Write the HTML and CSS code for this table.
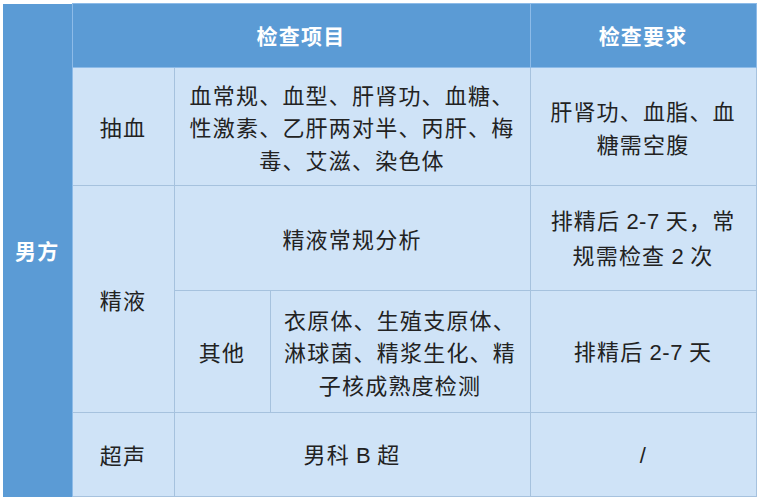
FILE: index.html
```html
<!DOCTYPE html>
<html lang="zh-CN">
<head>
<meta charset="utf-8">
<link rel="stylesheet" href="styles.css">
</head>
<body>
<table class="exam">
  <colgroup>
    <col class="c-side">
    <col class="c-cat">
    <col class="c-sub">
    <col class="c-item">
    <col class="c-req">
  </colgroup>
  <tr class="r-head">
    <th class="side" rowspan="5">男方</th>
    <th colspan="3">检查项目</th>
    <th>检查要求</th>
  </tr>
  <tr class="r-blood">
    <td>抽血</td>
    <td colspan="2">血常规、血型、肝肾功、血糖、<br>性激素、乙肝两对半、丙肝、梅<br>毒、艾滋、染色体</td>
    <td>肝肾功、血脂、血<br>糖需空腹</td>
  </tr>
  <tr class="r-semen">
    <td rowspan="2">精液</td>
    <td colspan="2">精液常规分析</td>
    <td>排精后 <span class="num">2-7</span> 天，常<br>规需检查 <span class="num">2</span> 次</td>
  </tr>
  <tr class="r-other">
    <td>其他</td>
    <td>衣原体、生殖支原体、<br>淋球菌、精浆生化、精<br>子核成熟度检测</td>
    <td>排精后 <span class="num">2-7</span> 天</td>
  </tr>
  <tr class="r-us">
    <td>超声</td>
    <td colspan="2">男科 <span class="num">B</span> 超</td>
    <td><span class="num">/</span></td>
  </tr>
</table>
</body>
</html>
```

FILE: styles.css
```css
html, body {
  margin: 0;
  padding: 0;
  background: #ffffff;
}

.exam {
  margin: 3px 0 0 3px;
  width: 753px;
  border-collapse: collapse;
  table-layout: fixed;
  font-family: "Noto Sans CJK SC", "Noto Sans", sans-serif;
  font-size: 22px;
  letter-spacing: 1.2px;
  color: #222222;
}

.c-side { width: 69px; }
.c-cat { width: 102px; }
.c-sub { width: 96px; }
.c-item { width: 260px; }
.c-req { width: 226px; }

.exam th,
.exam td {
  padding: 0 4px;
  text-align: center;
  vertical-align: middle;
  line-height: 32.5px;
}

.exam td {
  background: #cfe3f7;
  border: 1px solid #a6c2de;
}

.exam th {
  background: #5b9bd5;
  color: #ffffff;
  font-weight: 700;
  font-size: 21px;
  border: 1px solid #8dbbe8;
}

.exam th.side {
  border: none;
  border-right: 1px solid #8dbbe8;
  padding: 0;
}

.num {
  font-family: "Liberation Sans", Arial, sans-serif;
  letter-spacing: 0.5px;
}

.r-head { height: 64px; }
.r-blood { height: 118px; }
.r-semen { height: 105px; }
.r-other { height: 122px; }
.r-us { height: 84px; }
```
